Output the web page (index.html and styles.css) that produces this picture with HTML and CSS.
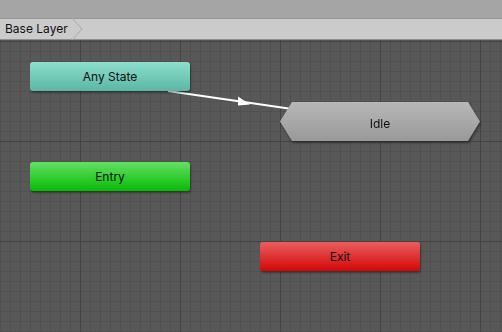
FILE: index.html
```html
<!DOCTYPE html>
<html lang="en">
<head>
    <meta charset="UTF-8">
    <meta name="viewport" content="width=device-width, initial-scale=1.0">
    <title>Animator</title>
    <link rel="stylesheet" href="styles.css">
</head>
<body>
    <div class="toolbar"></div>
    <div class="breadcrumb">
        <span class="crumb">Base Layer</span>
        <svg class="chevron" width="14" height="22" viewBox="0 0 14 22">
            <polyline points="1,0 11,11 1,22" fill="none" stroke="#a8a8a8" stroke-width="1"/>
        </svg>
    </div>

    <div class="graph">
        <!-- transition Any State -> Idle -->
        <svg class="links" width="502" height="292" viewBox="0 0 502 292">
            <line x1="168" y1="51" x2="292" y2="69" stroke="#fff" stroke-width="2"/>
            <polygon points="250,64.5 238,56.5 238,65.5" fill="#fff"/>
        </svg>

        <div class="node any-state">Any State</div>
        <div class="node entry">Entry</div>
        <div class="node exit">Exit</div>
        <div class="state-wrap">
            <div class="state">Idle</div>
        </div>
    </div>
</body>
</html>
```

FILE: styles.css
```css
body {
    margin: 0;
    padding: 0;
    width: 502px;
    height: 332px;
    overflow: hidden;
    font-family: Inter, "Noto Sans", sans-serif;
    font-size: 12px;
    color: #111;
}
.toolbar {
    height: 18px;
    background-color: #a5a5a5;
    border-bottom: 1px solid #999;
}
.breadcrumb {
    height: 20px;
    display: flex;
    align-items: center;
    background-color: #cbcbcb;
    border-bottom: 1px solid #8f8f8f;
}
.crumb {
    padding-left: 5px;
    padding-right: 3px;
    line-height: 20px;
}
.chevron {
    display: block;
}
.graph {
    position: relative;
    height: 292px;
    background-color: #585858;
    background-image:
        linear-gradient(to right, #434343 1px, transparent 1px),
        linear-gradient(to bottom, #434343 1px, transparent 1px),
        linear-gradient(to right, #505050 1px, transparent 1px),
        linear-gradient(to bottom, #505050 1px, transparent 1px);
    background-size: 100px 100px, 100px 100px, 10px 10px, 10px 10px;
    background-position: 80px 0, 0 1px, 0 0, 0 1px;
}
.links {
    position: absolute;
    left: 0;
    top: 0;
    z-index: 0;
}
.node {
    position: absolute;
    width: 160px;
    height: 29px;
    border-radius: 3px;
    display: flex;
    align-items: center;
    justify-content: center;
    box-shadow: 1px 2px 2px rgba(0, 0, 0, 0.35);
    z-index: 1;
}
.any-state {
    left: 30px;
    top: 22px;
    background: linear-gradient(to bottom, #8ddfcc, #5ab6a3);
}
.entry {
    left: 30px;
    top: 122px;
    background: linear-gradient(to bottom, #66e066, #06bb06);
}
.exit {
    left: 260px;
    top: 202px;
    background: linear-gradient(to bottom, #ea5f5f, #d40606);
}
.state-wrap {
    position: absolute;
    left: 280px;
    top: 62px;
    filter: drop-shadow(1px 2px 1px rgba(0, 0, 0, 0.4));
    z-index: 1;
}
.state {
    width: 200px;
    height: 39px;
    box-sizing: border-box;
    padding-top: 3px;
    display: flex;
    align-items: center;
    justify-content: center;
    background: linear-gradient(to bottom, #b8b8b8, #999);
    clip-path: polygon(12px 0, 188px 0, 200px 19.5px, 188px 39px, 12px 39px, 0 19.5px);
}
```
